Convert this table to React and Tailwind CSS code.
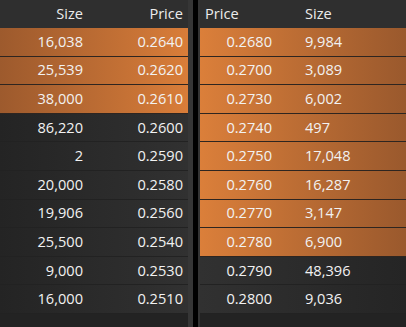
import React from 'react';

const bids = [
    { size: '16,038', price: '0.2640', fill: true },
    { size: '25,539', price: '0.2620', fill: true },
    { size: '38,000', price: '0.2610', fill: true },
    { size: '86,220', price: '0.2600' },
    { size: '2', price: '0.2590' },
    { size: '20,000', price: '0.2580' },
    { size: '19,906', price: '0.2560' },
    { size: '25,500', price: '0.2540' },
    { size: '9,000', price: '0.2530' },
    { size: '16,000', price: '0.2510' },
];

const asks = [
    { price: '0.2680', size: '9,984', fill: true },
    { price: '0.2700', size: '3,089', fill: true },
    { price: '0.2730', size: '6,002', fill: true },
    { price: '0.2740', size: '497', fill: true },
    { price: '0.2750', size: '17,048', fill: true },
    { price: '0.2760', size: '16,287', fill: true },
    { price: '0.2770', size: '3,147', fill: true },
    { price: '0.2780', size: '6,900', fill: true },
    { price: '0.2790', size: '48,396' },
    { price: '0.2800', size: '9,036' },
];

const App = () => {
    return (
        <div className="w-[406px] h-[327px] flex bg-[#232323] text-[14.6px] text-[#f2f2f2] overflow-hidden" style={{ fontFamily: '"Open Sans", sans-serif' }}>
            {/* Bids */}
            <div className="w-[188px] flex flex-col">
                <div className="h-[28px] flex items-center bg-[#2f2f2f] text-[#ececec]">
                    <span className="w-[83px] text-right">Size</span>
                    <span className="w-[100px] text-right">Price</span>
                </div>
                {bids.map((row, i) => (
                    <div
                        key={i}
                        className={`h-[28.6px] flex items-center border-b ${row.fill
                            ? 'bg-gradient-to-r from-[#9d5a2d] to-[#d97d39] border-[#2e2520]'
                            : 'bg-gradient-to-r from-[#242424] to-[#313131] border-[#222222]'
                            }`}
                    >
                        <span className="w-[83px] text-right">{row.size}</span>
                        <span className="w-[100px] text-right">{row.price}</span>
                    </div>
                ))}
            </div>

            {/* Divider */}
            <div className="w-[5px] bg-[#363636]" />
            <div className="w-[5px] bg-black" />
            <div className="w-[2px] bg-[#333333]" />

            {/* Asks */}
            <div className="flex-1 flex flex-col">
                <div className="h-[28px] flex items-center bg-[#2f2f2f] text-[#ececec]">
                    <span className="w-[105px] pl-[5px]">Price</span>
                    <span>Size</span>
                </div>
                {asks.map((row, i) => (
                    <div
                        key={i}
                        className={`h-[28.6px] flex items-center border-b ${row.fill
                            ? 'bg-gradient-to-r from-[#db7f3a] to-[#9a592d] border-[#2e2520]'
                            : 'bg-gradient-to-r from-[#313131] to-[#252525] border-[#222222]'
                            }`}
                    >
                        <span className="w-[72px] text-right">{row.price}</span>
                        <span className="pl-[33px]">{row.size}</span>
                    </div>
                ))}
            </div>
        </div>
    );
};

export default App;
